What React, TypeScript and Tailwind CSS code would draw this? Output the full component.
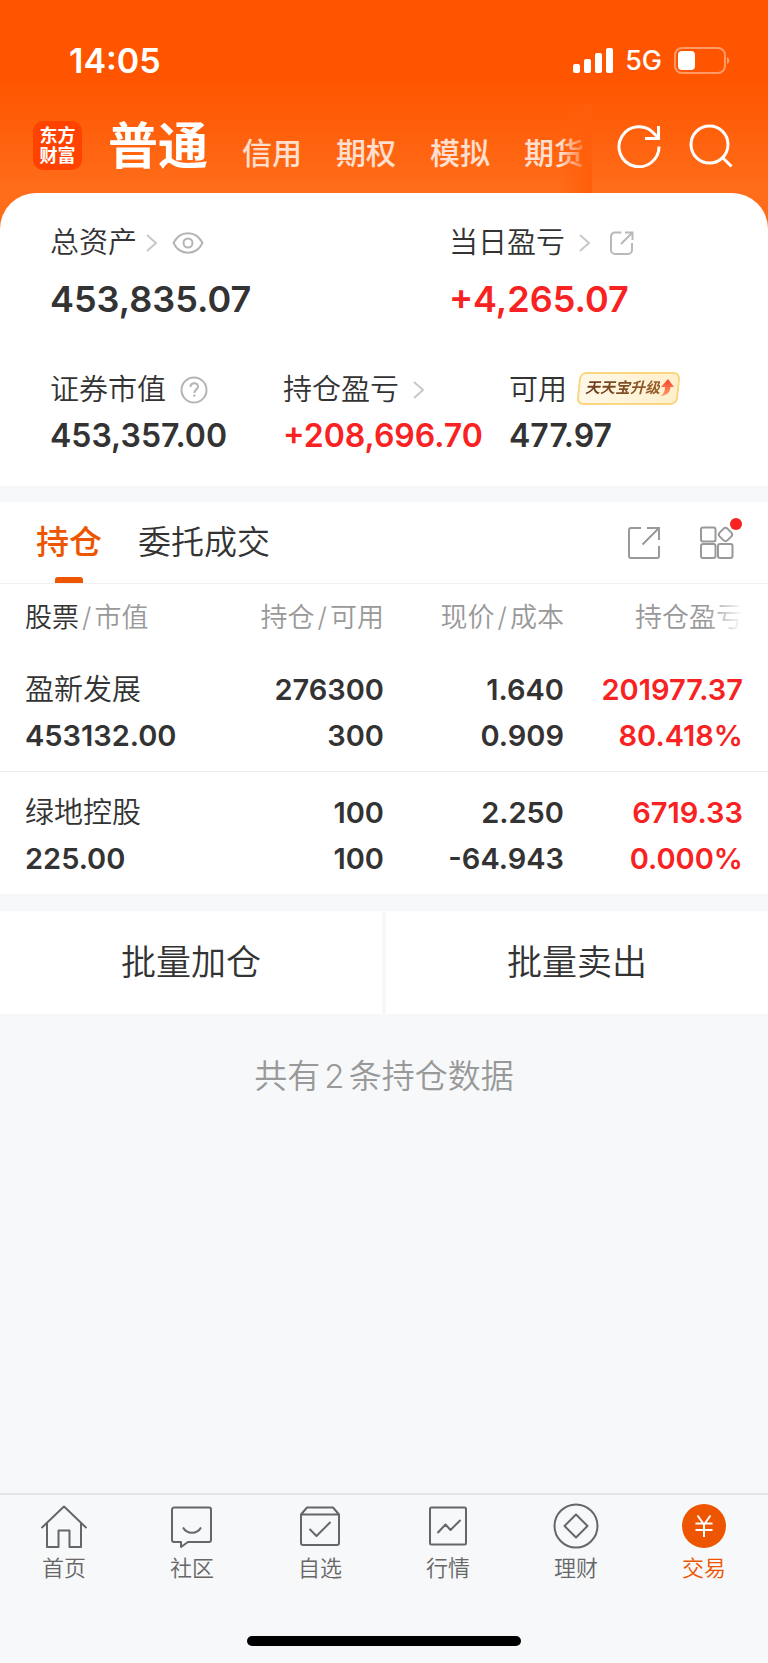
import React from 'react';

interface Holding {
  name: string;
  value: string;
  amount: string;
  available: string;
  price: string;
  cost: string;
  profit: string;
  rate: string;
}

const holdings: Holding[] = [
  { name: '盈新发展', value: '453132.00', amount: '276300', available: '300', price: '1.640', cost: '0.909', profit: '201977.37', rate: '80.418%' },
  { name: '绿地控股', value: '225.00', amount: '100', available: '100', price: '2.250', cost: '-64.943', profit: '6719.33', rate: '0.000%' },
];

const accounts = ['信用', '期权', '模拟', '期货'];

function Chevron() {
  return (
    <svg width="12" height="18" viewBox="0 0 12 18" fill="none" stroke="#c8c8c8" strokeWidth="2" aria-hidden="true">
      <path d="M1 1l9 8-9 8" />
    </svg>
  );
}

function StatusBar() {
  return (
    <div className="flex h-[104px] items-center justify-between pt-[18px] pl-[69px] pr-[38px] text-white">
      <span className="text-[34px] leading-10 font-semibold">14:05</span>
      <div className="flex items-center">
        <svg width="40" height="26" viewBox="0 0 40 26" fill="#fff" aria-hidden="true">
          <rect x="0" y="16" width="7" height="9" rx="2" />
          <rect x="11" y="11" width="7" height="14" rx="2" />
          <rect x="22" y="5" width="7" height="20" rx="2" />
          <rect x="33" y="0" width="7" height="25" rx="2" />
        </svg>
        <span className="ml-3 text-[27px] leading-8 font-medium">5G</span>
        <svg className="ml-3" width="56" height="28" viewBox="0 0 56 28" aria-hidden="true">
          <rect x="1" y="1" width="50" height="25" rx="7" fill="none" stroke="#fff" strokeOpacity=".4" strokeWidth="2" />
          <rect x="4" y="4" width="17" height="19" rx="4" fill="#fff" />
          <path d="M53 10c3 1 3 6 0 7z" fill="#fff" fillOpacity=".45" />
        </svg>
      </div>
    </div>
  );
}

function AccountBar() {
  return (
    <header className="flex h-[89px] items-stretch pl-[33px] pr-[35px] text-white">
      <div className="flex items-center pb-[6px]">
        <div className="flex size-[49px] flex-col items-center justify-center rounded-[10px] bg-[#ff4200] text-[18px] leading-[20px] font-bold">
          <span>东方</span>
          <span>财富</span>
        </div>
      </div>
      <nav className="relative ml-[26px] flex min-w-0 flex-1 items-center overflow-hidden pb-[6px] whitespace-nowrap">
        <a href="#normal" className="text-[50px] leading-[60px] font-bold">普通</a>
        <div className="ml-[34px] flex gap-[34px] pt-[14px]">
          {accounts.map(name => (
            <a key={name} href={`#${name}`} className="text-[30px] leading-9 font-medium text-white/80">{name}</a>
          ))}
        </div>
        <div className="absolute inset-y-0 right-0 w-8 bg-gradient-to-r from-[#ff5a05]/0 to-[#ff5e0a]" />
      </nav>
      <div className="ml-[25px] flex items-center gap-7 pb-[6px]">
        <button type="button" aria-label="刷新">
          <svg width="44" height="44" viewBox="0 0 44 44" fill="none" stroke="#fff" strokeWidth="3">
            <path d="M42 22.500A20 20 0 1 1 37 9.500L41.500 14" />
            <path d="M41.500 2v12.500H28" />
          </svg>
        </button>
        <button type="button" aria-label="搜索">
          <svg width="44" height="44" viewBox="0 0 44 44" fill="none" stroke="#fff" strokeWidth="3">
            <circle cx="20.500" cy="20.500" r="18.500" />
            <path d="M33.500 33.500L42.500 42.500" />
          </svg>
        </button>
      </div>
    </header>
  );
}

function UpgradeBadge() {
  return (
    <button type="button" className="relative mb-1 ml-[11px] flex h-[33px] w-[101px] items-center pl-[7px]">
      <span className="absolute inset-0 -skew-x-6 rounded-[7px] border-2 border-[#fbd680] bg-gradient-to-r from-[#fff8e8] to-[#ffefcb]" />
      <span className="relative bg-gradient-to-r from-[#6b3a1c] to-[#96602c] bg-clip-text text-[15px] leading-5 font-bold whitespace-nowrap text-transparent italic">天天宝升级</span>
      <svg className="relative" width="14" height="18" viewBox="0 0 14 18" aria-hidden="true">
        <defs>
          <linearGradient id="arrow" x1="0" y1="0" x2="0" y2="1">
            <stop offset="0" stopColor="#f5432c" />
            <stop offset="1" stopColor="#ff9a62" />
          </linearGradient>
        </defs>
        <path d="M8 0l6 8h-3.500C10 13 7 16.500 1 17c3-2.500 4-5 4-9H1z" fill="url(#arrow)" />
      </svg>
    </button>
  );
}

function Summary() {
  return (
    <section className="rounded-t-[36px] bg-white pt-[30px] pb-7 pl-[50px] text-[#333]">
      <div className="grid grid-cols-[5fr_4fr]">
        <div>
          <div className="flex h-10 items-center text-[29px]">
            总资产
            <span className="ml-[9px]"><Chevron /></span>
            <button type="button" aria-label="隐藏金额" className="ml-[14px]">
              <svg width="32" height="22" viewBox="0 0 32 22" fill="none" stroke="#b4b4b4" strokeWidth="2">
                <path d="M1.500 11C8-2 24-2 30.500 11 24 24 8 24 1.500 11z" strokeLinejoin="round" />
                <circle cx="16" cy="11" r="4.500" />
              </svg>
            </button>
          </div>
          <div className="mt-[14px] text-[36px] leading-[44px] font-semibold">453,835.07</div>
        </div>
        <div>
          <div className="flex h-10 items-center text-[29px]">
            当日盈亏
            <span className="ml-[14px]"><Chevron /></span>
            <button type="button" aria-label="分享盈亏" className="ml-[19px]">
              <svg width="24" height="24" viewBox="0 0 24 24" fill="none" stroke="#b9b9b9" strokeWidth="2">
                <path d="M11.500 1.500H5a4 4 0 0 0-4 4V19a4 4 0 0 0 4 4h13a4 4 0 0 0 4-4v-7" />
                <path d="M15 1.500h7.500V9M22 2L11 13" />
              </svg>
            </button>
          </div>
          <div className="mt-[14px] text-[36px] leading-[44px] font-semibold text-[#f82222]">+4,265.07</div>
        </div>
      </div>

      <div className="mt-[49px] grid grid-cols-[233fr_226fr_259fr]">
        <div>
          <div className="flex h-10 items-center text-[29px]">
            证券市值
            <button type="button" aria-label="说明" className="ml-[14px]">
              <svg width="28" height="28" viewBox="0 0 28 28" fill="none" stroke="#b4b4b4" strokeWidth="2">
                <circle cx="14" cy="14" r="12.500" />
                <path d="M10.500 11c0-5 7.500-5 7.500-.5 0 3-3.700 3-3.700 6.500M14.300 18.500v2.300" />
              </svg>
            </button>
          </div>
          <div className="mt-1 text-[32px] leading-[44px] font-semibold">453,357.00</div>
        </div>
        <div>
          <div className="flex h-10 items-center text-[29px]">
            持仓盈亏
            <span className="ml-[14px]"><Chevron /></span>
          </div>
          <div className="mt-1 text-[32px] leading-[44px] font-semibold text-[#f82222]">+208,696.70</div>
        </div>
        <div>
          <div className="flex h-10 items-center text-[29px]">
            可用
            <UpgradeBadge />
          </div>
          <div className="mt-1 text-[32px] leading-[44px] font-semibold">477.97</div>
        </div>
      </div>
    </section>
  );
}

function HoldingTabs() {
  return (
    <div className="flex h-[82px] items-stretch border-b border-[#f0f0f1] bg-white pr-[34px] pl-9 text-[33px] text-[#333]">
      <button type="button" className="relative font-medium text-[#ee5500]">
        持仓
        <span className="absolute bottom-0 left-1/2 h-[6px] w-7 -translate-x-1/2 rounded-t-[3px] bg-[#ee5500]" />
      </button>
      <button type="button" className="ml-9">委托成交</button>
      <div className="ml-auto flex items-center gap-10">
        <button type="button" aria-label="分享">
          <svg width="32" height="32" viewBox="0 0 32 32" fill="none" stroke="#999" strokeWidth="2">
            <path d="M13 1H3a2 2 0 0 0-2 2v26a2 2 0 0 0 2 2h26a2 2 0 0 0 2-2V19" />
            <path d="M19 1h12v12M30.500 1.500L14.500 17.500" />
          </svg>
        </button>
        <button type="button" aria-label="更多功能" className="relative">
          <svg width="34" height="34" viewBox="0 0 34 34" fill="none" stroke="#999" strokeWidth="2">
            <rect x="1" y="1.500" width="14.500" height="14" rx="2" />
            <rect x="1" y="18" width="14.500" height="14" rx="2" />
            <rect x="18" y="18" width="14.500" height="14" rx="2" />
            <rect x="20" y="3" width="11" height="11" rx="3" transform="rotate(45 25.500 8.500)" />
          </svg>
          <span className="absolute -top-2 -right-2 size-3 rounded-full bg-[#f82222]" />
        </button>
      </div>
    </div>
  );
}

function HoldingTable() {
  return (
    <table className="w-full table-fixed border-collapse bg-white text-right text-[29px] leading-[46px] font-semibold text-[#333]">
      <colgroup>
        <col className="w-[27%]" />
        <col className="w-[23%]" />
        <col className="w-[180px]" />
        <col />
      </colgroup>
      <thead className="text-[27px] leading-[62px] text-[#999]">
        <tr>
          <th className="pt-[3px] pl-[25px] text-left font-[350] whitespace-nowrap"><span className="text-[#333]">股票</span><span className="mx-[3px]">/</span>市值</th>
          <th className="pt-[3px] font-[350] whitespace-nowrap">持仓<span className="mx-[3px]">/</span>可用</th>
          <th className="pt-[3px] font-[350] whitespace-nowrap">现价<span className="mx-[3px]">/</span>成本</th>
          <th className="relative pt-[3px] pr-[25px] font-[350] whitespace-nowrap">
            持仓盈亏
            <span className="absolute inset-y-0 right-[25px] w-9 bg-gradient-to-r from-white/0 to-white" />
          </th>
        </tr>
      </thead>
      <tbody>
        {holdings.map(h => (
          <tr key={h.name} className="border-b border-[#ededee] last:border-b-0">
            <td className="pt-[18px] pb-3 pl-[25px] text-left">
              <div className="font-[350]">{h.name}</div>
              <div>{h.value}</div>
            </td>
            <td className="pt-[18px] pb-3">
              <div>{h.amount}</div>
              <div>{h.available}</div>
            </td>
            <td className="pt-[18px] pb-3">
              <div>{h.price}</div>
              <div>{h.cost}</div>
            </td>
            <td className="pt-[18px] pr-[25px] pb-3 text-[#f82222]">
              <div>{h.profit}</div>
              <div>{h.rate}</div>
            </td>
          </tr>
        ))}
      </tbody>
    </table>
  );
}

const navItems = [
  {
    label: '首页',
    icon: (
      <>
        <path d="M1.500 26L24 4.500 46.500 26" />
        <path d="M7 21v24h11.500V28.500h11V45H41V21" />
      </>
    ),
  },
  {
    label: '社区',
    icon: (
      <>
        <path d="M6 5.500h35a2 2 0 0 1 2 2V38a2 2 0 0 1-2 2H20l-7 5v-5H6a2 2 0 0 1-2-2V7.500a2 2 0 0 1 2-2z" />
        <path d="M15 25.500c4 7 14 7 18 0" />
      </>
    ),
  },
  {
    label: '自选',
    icon: (
      <>
        <path d="M5 12.500h38V41a2 2 0 0 1-2 2H7a2 2 0 0 1-2-2zM5 12.500l6-7h26l6 7" />
        <path d="M13.500 27l7 7L34.500 20" />
      </>
    ),
  },
  {
    label: '行情',
    icon: (
      <>
        <rect x="6" y="5.500" width="36" height="37" rx="1.500" />
        <path d="M13.500 31l8-8.500 5 5.500L36.500 18" />
      </>
    ),
  },
  {
    label: '理财',
    icon: (
      <>
        <circle cx="24" cy="24" r="21.500" />
        <path d="M24 12.500L35.500 24 24 35.500 12.500 24z" />
      </>
    ),
  },
  {
    label: '交易',
    active: true,
    icon: (
      <>
        <circle cx="24" cy="24" r="22" fill="#ee5500" stroke="none" />
        <path d="M17.500 13.500L24 22.500l6.500-9M24 22.500v12.500M15.500 21.500h17M15.500 28h17" stroke="#fff" />
      </>
    ),
  },
];

function BottomNav() {
  return (
    <footer className="mt-auto border-t-2 border-[#e4e5e7]">
      <nav className="grid grid-cols-6 pt-[7px]">
        {navItems.map(item => (
          <a
            key={item.label}
            href={`#${item.label}`}
            className={`flex flex-col items-center text-[22px] leading-7 ${item.active ? 'text-[#ee5500]' : 'text-[#666]'}`}
          >
            <svg width="48" height="48" viewBox="0 0 48 48" fill="none" stroke="currentColor" strokeWidth="2" strokeLinejoin="round">
              {item.icon}
            </svg>
            <span className="mt-1">{item.label}</span>
          </a>
        ))}
      </nav>
      <div className="mx-auto mt-[54px] mb-[17px] h-[10px] w-[274px] rounded-full bg-black" />
    </footer>
  );
}

export default function App() {
  return (
    <div className="flex min-h-screen flex-col bg-[#f7f8fa] font-['Inter','Noto_Sans_CJK_SC',sans-serif] font-[350]">
      <div className="bg-[linear-gradient(#ff5500_80px,#ff6d1a_192px)]">
        <StatusBar />
        <AccountBar />
        <Summary />
      </div>

      <main className="pt-4">
        <HoldingTabs />
        <HoldingTable />
        <div className="mt-[17px] grid grid-cols-2 gap-1 text-[35px] leading-[103px] text-[#333]">
          <button type="button" className="bg-white">批量加仓</button>
          <button type="button" className="bg-white">批量卖出</button>
        </div>
        <p className="mt-10 text-center text-[33px] leading-[44px] text-[#999]">
          共有<span className="mx-1">2</span>条持仓数据
        </p>
      </main>

      <BottomNav />
    </div>
  );
}
